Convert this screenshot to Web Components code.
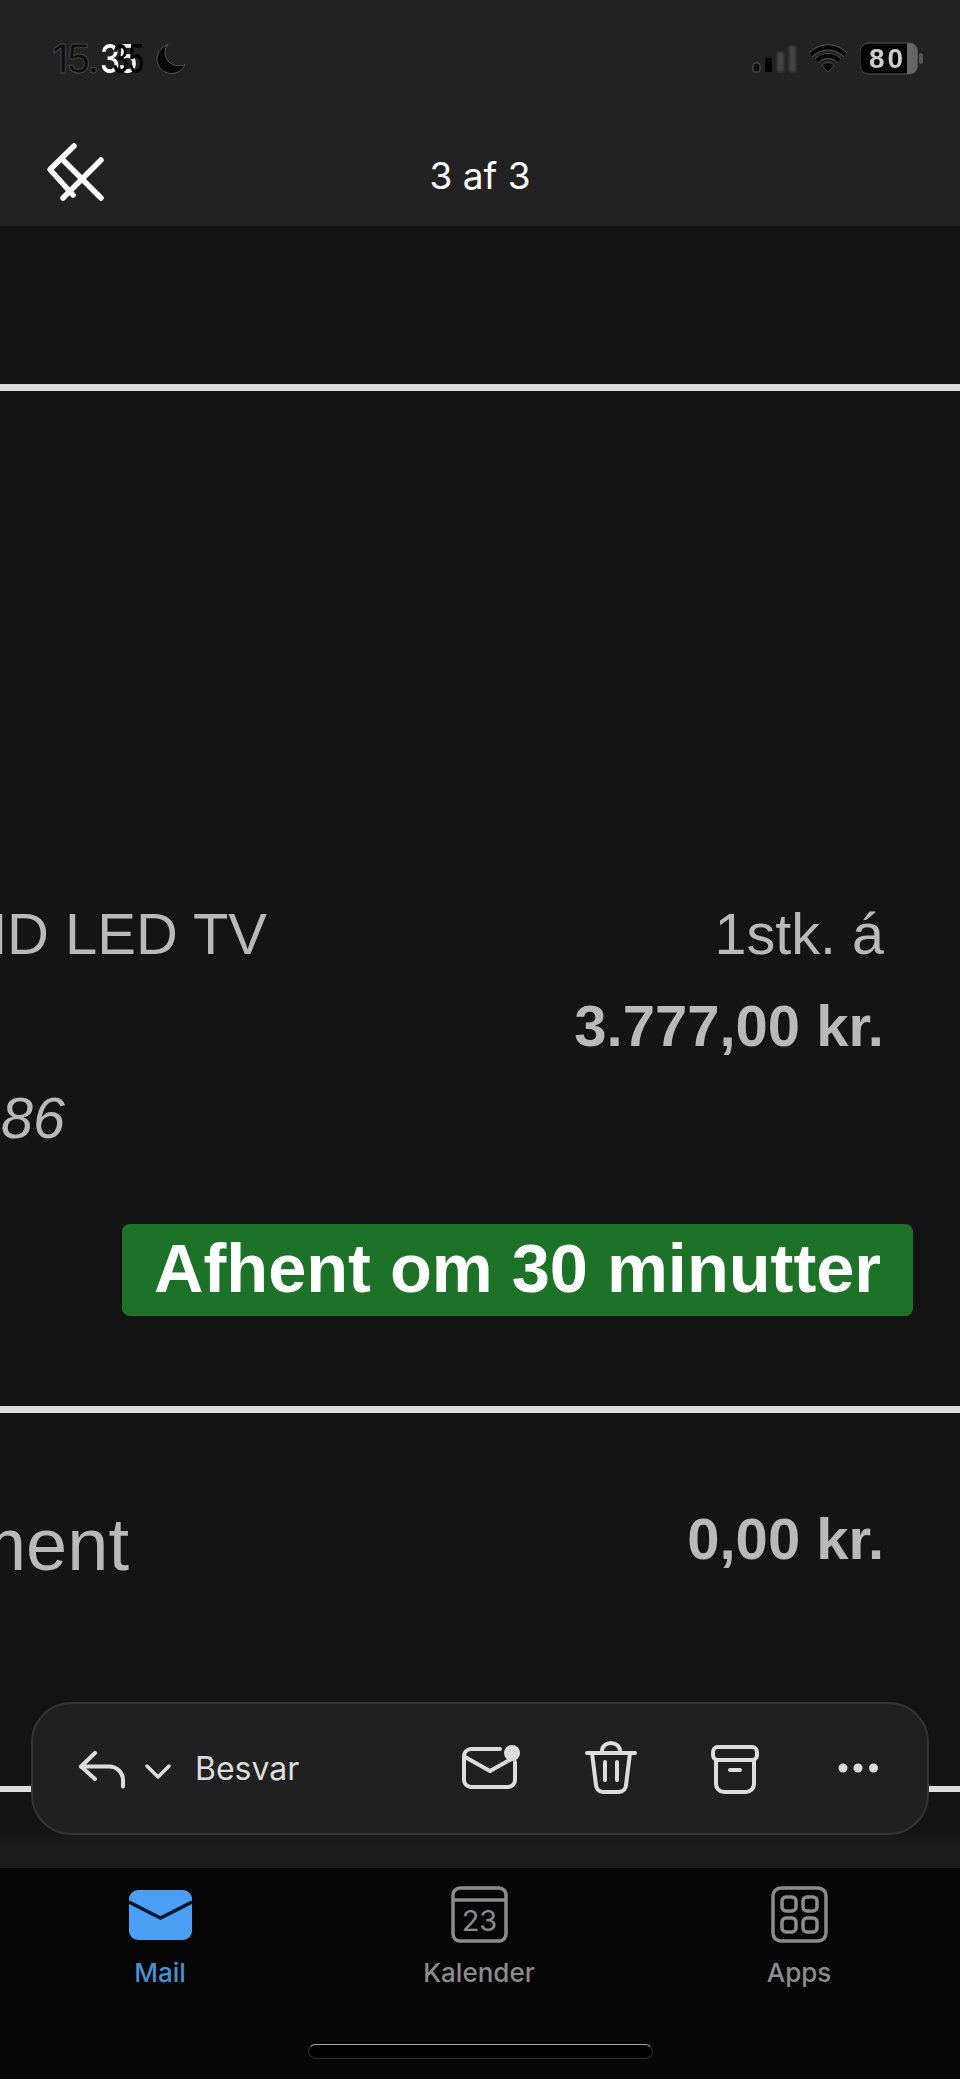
<!DOCTYPE html>
<html lang="da"><head><meta charset="utf-8"><title>Mail</title>
<style>
html,body{margin:0;padding:0;background:#141414}
body{width:960px;height:2079px;overflow:hidden;font-family:"Liberation Sans",Arial,sans-serif}
mail-screen{height:2079px}
</style></head><body>
<mail-screen>
  <status-bar slot="top"></status-bar>
  <nav-bar slot="top" title="3 af 3"></nav-bar>
  <mail-body>
    <order-line name="UHD LED TV" qty="1stk. á" price="3.777,00 kr." sku="86"></order-line>
    <order-total label="Betalingsment" amount="0,00 kr."></order-total>
  </mail-body>
  <action-bar slot="float"></action-bar>
  <tab-bar slot="bottom"></tab-bar>
</mail-screen>
<script>
function def(name,css,html){
  customElements.define(name,class extends HTMLElement{
    connectedCallback(){
      if(this.shadowRoot)return;
      const r=this.attachShadow({mode:'open'});
      const a=k=>this.getAttribute(k)||'';
      r.innerHTML='<style>'+css+'</style>'+(typeof html==='function'?html(a):html);
    }
  });
}
def('mail-screen',`
:host{display:flex;flex-direction:column;width:960px;position:relative;overflow:hidden;background:#141414}
.mid{flex:1;display:flex;flex-direction:column;min-height:0;position:relative}
`,`<slot name="top"></slot><div class="mid"><slot></slot></div><slot name="float"></slot><slot name="bottom"></slot>`);

def('status-bar',`
:host{display:flex;height:116px;background:#222;justify-content:space-between;box-sizing:border-box;padding:41px 37px 0 52px}
.l{display:flex;gap:12px;height:38px;align-items:flex-start}
.t{width:91px;font:500 40px/36px Inter,"Liberation Sans",sans-serif;color:#0e0e0e;-webkit-text-stroke:1px #444;position:relative;white-space:nowrap;letter-spacing:-2.5px}
.t b{display:inline-block;font-weight:500;color:#fff;-webkit-text-stroke:0;letter-spacing:-3px;margin-left:3px;transform:scaleX(.8);transform-origin:left}
.t i{position:absolute;font-style:normal;left:60px;top:0;color:#030303;-webkit-text-stroke:0;letter-spacing:-2px;transform:scaleX(.68);transform-origin:left}
.r{display:flex;align-items:flex-start;gap:0}
svg{display:block}
.bat{position:relative;width:63px;height:34px;margin-left:12px;margin-top:1px}
.bat span{position:absolute;left:9px;top:1px;font:700 28px/32px "Liberation Sans",sans-serif;color:#ccc;letter-spacing:3px;filter:blur(.4px)}
`,`<div class="l"><div class="t">15.<b>35</b><i>35</i></div>
<svg width="32" height="32" viewBox="0 0 32 32" style="margin-top:2px"><path d="M13 1.500C8 3 2 8 2 16c0 8 6.500 14.500 14.500 14.500 6.500 0 11.500-4 13.500-9-2 1-4 1.200-6 1.200C15.500 22.700 10 17 10 9.500 10 6.500 11 3.800 13 1.500z" fill="#060606" stroke="#555" stroke-width="1"/></svg></div>
<div class="r">
<svg width="46" height="30" viewBox="0 0 46 30" style="margin-top:3px">
<rect x="1" y="19" width="7" height="9" rx="2" fill="#111" stroke="#555"/>
<rect x="13" y="14" width="7" height="14" rx="1.500" fill="#000"/>
<rect x="25" y="8" width="7" height="20" rx="1.500" fill="#444" style="filter:blur(.8px)"/>
<rect x="37" y="2" width="7" height="26" rx="1.500" fill="#444" style="filter:blur(.8px)"/>
</svg>
<svg width="40" height="30" viewBox="0 0 44 32" preserveAspectRatio="none" style="margin-left:10px;margin-top:3px"><g fill="none" stroke="#555" stroke-width="6.500"><path d="M3 11.500C14 1 30 1 41 11.500"/><path d="M9.500 18c7.500-7 17.500-7 25 0"/></g><g fill="none" stroke="#050505" stroke-width="4.500"><path d="M3 11.500C14 1 30 1 41 11.500"/><path d="M9.500 18c7.500-7 17.500-7 25 0"/></g><path d="M22 30l-7-7.500c4-3.500 10-3.500 14 0z" fill="#050505" stroke="#555"/></svg>
<div class="bat"><svg width="63" height="34" viewBox="0 0 63 34"><rect x=".5" y="1" width="57" height="31" rx="8" fill="#666" stroke="#555"/><path d="M8.500 1.500H47v30H8.500a8 8 0 0 1-8-8v-14a8 8 0 0 1 8-8z" fill="#020202"/><rect x="59" y="11" width="4" height="11" rx="2" fill="#555"/></svg><span>80</span></div>
</div>`);

def('nav-bar',`
:host{display:flex;height:110px;background:#222;align-items:center;justify-content:center;position:relative}
svg{position:absolute;left:46px;top:25px}
.t{font:400 37px/40px Inter,"Liberation Sans",sans-serif;color:#fff;margin-top:10px}
`,a=>`<svg width="62" height="62" viewBox="0 0 62 62" fill="none" stroke="#fff" stroke-width="5.500" stroke-linecap="round" stroke-linejoin="round"><path d="M28 5L4 28.500 27 54"/><path d="M17 19L55 57"/><path d="M55 19L17 57" /></svg><div class="t">${a('title')}</div>`);

def('mail-body',`
:host{display:block;flex:1;min-height:0;padding-top:158px;position:relative;background:linear-gradient(#141414 0,#141414 1600px,#1c1c1c 1620px)}
.rule{height:7px;background:#dcdcdc}
`,`<div class="rule"></div><slot></slot>`);

def('order-line',`
:host{display:block;height:1015px;box-sizing:border-box;padding:497px 76px 0 0;color:#b9b9b9;font:400 57.500px/92px "Liberation Sans",Arial,sans-serif}
.g{display:grid;grid-template-columns:267px 1fr;}
.n{display:flex;justify-content:flex-end;overflow:hidden;white-space:nowrap;font-size:58px}
.v{text-align:right}
b{font-weight:700;font-size:58px}
i{justify-self:start;grid-column:1;padding-left:1px}
.tag{display:block;width:791px;height:92px;margin:60px 0 0 122px;background:#1c7227;border-radius:8px;color:#fff;font:700 68.500px/90px "Liberation Sans",Arial,sans-serif;text-align:center;white-space:nowrap}
`,a=>`<div class="g"><div class="n">${a('name')}</div><div class="v">${a('qty')}</div><div></div><div class="v"><b>${a('price')}</b></div><i>${a('sku')}</i></div><div class="tag">Afhent om 30 minutter</div>`);

def('order-total',`
:host{display:block;color:#b9b9b9;font:400 58px/92px "Liberation Sans",Arial,sans-serif}
.rule{height:7px;background:#dcdcdc}
.g{display:flex;justify-content:space-between;height:373px;box-sizing:border-box;padding:86px 76px 0 0}
.n{width:129px;height:92px;display:flex;justify-content:flex-end;overflow:hidden;white-space:nowrap;font-size:74px;line-height:92px}
b{margin-top:-6px}
.low{height:6px;background:#dcdcdc}
`,a=>`<div class="rule"></div><div class="g"><div class="n">${a('label')}</div><b>${a('amount')}</b></div><div class="low"></div>`);

def('action-bar',`
:host{position:absolute;left:31px;top:1702px;width:898px;height:133px;box-sizing:border-box;background:#202020;border:2px solid #333;border-radius:40px;display:flex;align-items:center;color:#ddd;font:400 32px/36px Inter,"Liberation Sans",sans-serif}
svg{position:absolute;fill:none;stroke:#ddd;stroke-width:4;stroke-linecap:round;stroke-linejoin:round}
span{position:absolute;left:162px;top:47px}
`,`
<svg style="left:46px;top:47px" width="48" height="38" viewBox="0 0 48 38"><path d="M16 2L2 15.500 16 28"/><path d="M2 15.500H30c8 0 14 6 14 14v6"/></svg>
<svg style="left:112px;top:60px;stroke-width:3.500" width="26" height="15" viewBox="0 0 26 15"><path d="M2 2l11 11L24 2"/></svg>
<span>Besvar</span>
<svg style="left:429px;top:38px" width="60" height="54" viewBox="0 0 60 54"><path d="M38 7H9a7 7 0 0 0-7 7v24a7 7 0 0 0 7 7h37a7 7 0 0 0 7-7V20"/><path d="M3 15l25 14 25-14"/><circle cx="50" cy="11" r="8" fill="#ddd" stroke="none"/></svg>
<svg style="left:552px;top:37px" width="52" height="54" viewBox="0 0 52 54"><path d="M2 12H50"/><path d="M7 12l4 32a7 7 0 0 0 7 7h16a7 7 0 0 0 7-7l4-32"/><path d="M17 12v-2a9 8 0 0 1 18 0v2"/><path d="M20 21v18M32 21v18"/></svg>
<svg style="left:678px;top:41px" width="48" height="50" viewBox="0 0 48 50"><rect x="2" y="2" width="44" height="13" rx="5"/><path d="M5 15v24a8 8 0 0 0 8 8h22a8 8 0 0 0 8-8V15"/><path d="M19 25h10"/></svg>
<svg style="left:804px;top:58px;stroke:none;fill:#ddd" width="46" height="12" viewBox="0 0 46 12"><circle cx="6" cy="6" r="4.500"/><circle cx="21" cy="6" r="4.500"/><circle cx="36.500" cy="6" r="4.500"/></svg>
`);

def('tab-bar',`
:host{display:grid;grid-template-columns:320px 318px 322px;height:211px;flex:none;background:#060606;position:relative;font:500 26px/30px Inter,"Liberation Sans",sans-serif;color:#8c8c8c}
.tab{display:flex;flex-direction:column;align-items:center;padding-top:18px}
.ic{height:57px;flex:none;display:flex;align-items:center}
.lbl{margin-top:15px}
.on{color:#4a90d0}
.home{position:absolute;left:308px;top:176px;width:345px;height:15px;box-sizing:border-box;border-radius:8px;background:#000;border:1px solid #2c2c2c;border-top-color:#a5a5a5}
svg{display:block}
`,`
<div class="tab on"><div class="ic"><svg width="63" height="50" viewBox="0 0 63 50"><rect x="0" y="0" width="63" height="50" rx="9" fill="#4a9ff5"/><path d="M0 12l31.500 16L63 12" fill="none" stroke="#07182e" stroke-width="3.500"/></svg></div><div class="lbl">Mail</div></div>
<div class="tab"><div class="ic"><svg width="57" height="57" viewBox="0 0 57 57" fill="none" stroke="#8c8c8c" stroke-width="3.500"><rect x="2" y="2" width="53" height="53" rx="7"/><path d="M2 14H55"/><text x="28.500" y="45" text-anchor="middle" font-family="Inter,Liberation Sans,sans-serif" font-size="29" font-weight="400" fill="#8c8c8c" stroke="none">23</text></svg></div><div class="lbl">Kalender</div></div>
<div class="tab"><div class="ic"><svg width="57" height="57" viewBox="0 0 57 57" fill="none" stroke="#8c8c8c" stroke-width="3.500"><rect x="2" y="2" width="53" height="53" rx="8"/><rect x="11" y="11" width="14" height="14" rx="4"/><rect x="32" y="11" width="14" height="14" rx="4"/><rect x="11" y="32" width="14" height="14" rx="4"/><rect x="32" y="32" width="14" height="14" rx="4"/></svg></div><div class="lbl">Apps</div></div>
<div class="home"></div>`);
</script>
</body></html>
